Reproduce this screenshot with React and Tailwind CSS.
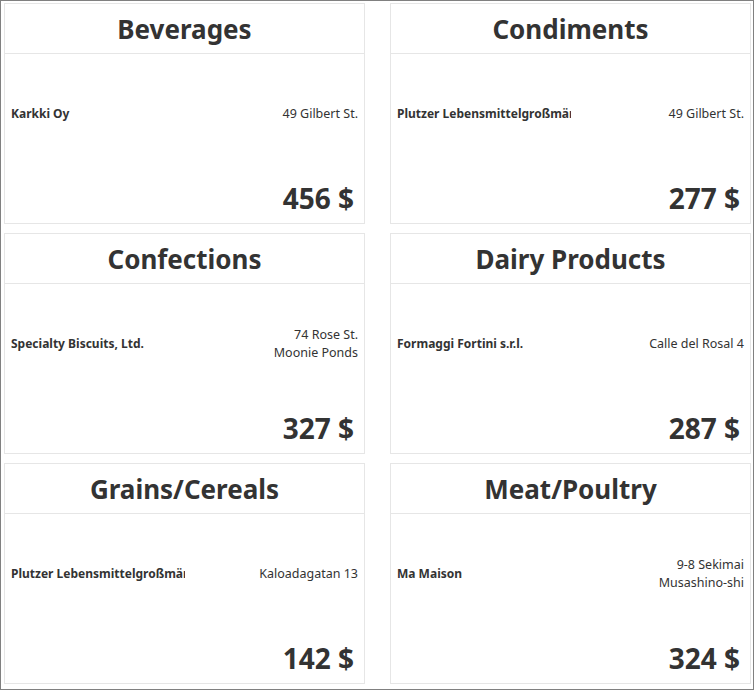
import React from 'react';

const categories = [
  { title: 'Beverages', name: 'Karkki Oy', address: ['49 Gilbert St.'], total: 456 },
  { title: 'Condiments', name: 'Plutzer Lebensmittelgroßmärkte AG', address: ['49 Gilbert St.'], total: 277 },
  { title: 'Confections', name: 'Specialty Biscuits, Ltd.', address: ['74 Rose St.', 'Moonie Ponds'], total: 327 },
  { title: 'Dairy Products', name: 'Formaggi Fortini s.r.l.', address: ['Calle del Rosal 4'], total: 287 },
  { title: 'Grains/Cereals', name: 'Plutzer Lebensmittelgroßmärkte AG', address: ['Kaloadagatan 13'], total: 142 },
  { title: 'Meat/Poultry', name: 'Ma Maison', address: ['9-8 Sekimai', 'Musashino-shi'], total: 324 },
];

const CategoryCard = ({ category }) => {
  return (
    <div className="flex h-[221px] flex-col border border-[#e6e6e6] bg-white">
      <div className="flex h-[50px] shrink-0 items-center justify-center border-b border-[#e6e6e6]">
        <h2 className="text-[26px] font-bold leading-none">{category.title}</h2>
      </div>
      <div className="flex flex-1 flex-col">
        <div className="flex flex-1 items-center px-[6px] text-[12px]">
          <div className="w-1/2 overflow-hidden whitespace-nowrap font-bold">{category.name}</div>
          <div className="w-1/2 text-[12.5px] leading-[18px] text-right">
            {category.address.map((line) => (
              <div key={line}>{line}</div>
            ))}
          </div>
        </div>
        <div className="h-[50px] pr-[10px] pt-[7px] text-right text-[28px] font-bold leading-[36px]">
          {category.total} $
        </div>
      </div>
    </div>
  );
};

export default function App() {
  return (
    <div
      className="h-[690px] w-[754px] border border-[#808080] bg-white pl-[3px] pt-[2px] text-[#333333]"
      style={{ fontFamily: '"Noto Sans", "Open Sans", sans-serif' }}
    >
      <div className="grid grid-cols-[361px_361px] gap-x-[25px] gap-y-[9px]">
        {categories.map((c) => (
          <CategoryCard key={c.title} category={c} />
        ))}
      </div>
    </div>
  );
}
